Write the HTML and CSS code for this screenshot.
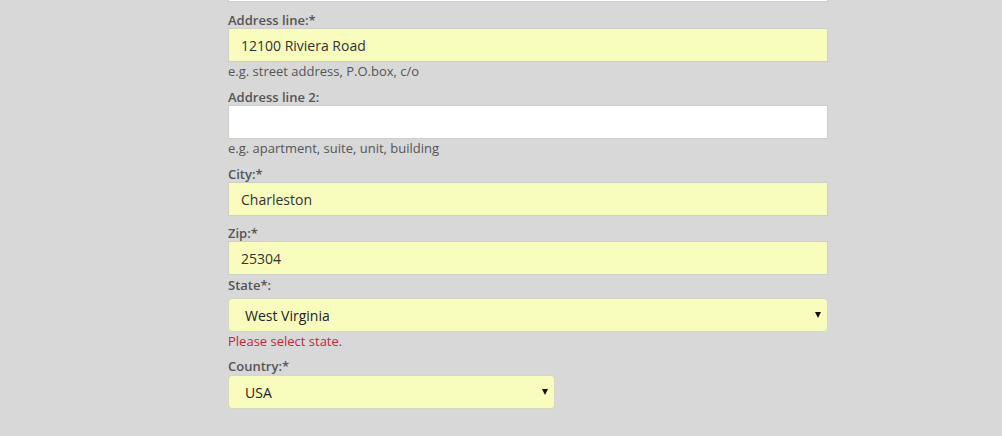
FILE: index.html
```html
<!DOCTYPE html>
<html lang="en">
<head>
<meta charset="utf-8">
<title>Address form</title>
<link rel="stylesheet" href="styles.css">
</head>
<body>
<form class="form">
  <input class="input input-white input-top" type="text" value="">

  <label class="label label-first">Address line:*</label>
  <input class="input input-yellow" type="text" value="12100 Riviera Road">
  <div class="help">e.g. street address, P.O.box, c/o</div>

  <label class="label">Address line 2:</label>
  <input class="input input-white" type="text" value="">
  <div class="help">e.g. apartment, suite, unit, building</div>

  <label class="label">City:*</label>
  <input class="input input-yellow" type="text" value="Charleston">

  <label class="label">Zip:*</label>
  <input class="input input-yellow" type="text" value="25304">

  <label class="label label-state">State*:</label>
  <div class="select-wrap select-full">
    <select class="select"><option>West Virginia</option></select>
  </div>
  <div class="error">Please select state.</div>

  <label class="label label-country">Country:*</label>
  <div class="select-wrap select-country">
    <select class="select"><option>USA</option></select>
  </div>
</form>
</body>
</html>
```

FILE: styles.css
```css
html, body {
  margin: 0;
  padding: 0;
  background: #d8d8d9;
}

body {
  font-family: "Open Sans", "DejaVu Sans", sans-serif;
  color: #555;
  overflow: hidden;
}

.form {
  width: 600px;
  margin-left: 228px;
  display: flex;
  flex-direction: column;
}

.label {
  display: block;
  box-sizing: border-box;
  font-size: 13px;
  font-weight: 600;
  line-height: 18px;
  height: 18px;
  padding-top: 1px;
  color: #555;
  margin-top: 7px;
}

.label-first { margin-top: 8px; }
.label-state { margin-top: 0; }
.label-country { margin-top: 6px; }

.input {
  box-sizing: border-box;
  width: 600px;
  height: 34px;
  margin: 0;
  padding: 0 12px;
  border: 1px solid #cfcfc8;
  border-radius: 0;
  font-family: "Open Sans", "DejaVu Sans", sans-serif;
  font-size: 14px;
  color: #333;
  outline: none;
}

.input-yellow { background: #f8fcbc; }
.input-white { background: #fff; }
.input-top { margin-top: -32px; }

.help {
  font-size: 13px;
  line-height: 18px;
  height: 18px;
  color: #555;
}

.select-wrap {
  position: relative;
}

.select-full { width: 600px; margin-top: 5px; }
.select-country { width: 327px; margin-top: 1px; }

.select {
  -webkit-appearance: none;
  appearance: none;
  box-sizing: border-box;
  width: 100%;
  height: 34px;
  margin: 0;
  padding: 0 16px;
  border: 1px solid #d6d6c4;
  border-radius: 4px;
  background: #f8fcbc;
  font-family: "Open Sans", "DejaVu Sans", sans-serif;
  font-size: 14px;
  color: #222;
  outline: none;
}

.select-wrap::after {
  content: "";
  position: absolute;
  right: 7px;
  top: 14px;
  width: 0;
  height: 0;
  border-left: 3.5px solid transparent;
  border-right: 3.5px solid transparent;
  border-top: 6px solid #111;
  pointer-events: none;
}

.error {
  font-size: 13px;
  line-height: 18px;
  height: 18px;
  color: #c0283a;
}
```
